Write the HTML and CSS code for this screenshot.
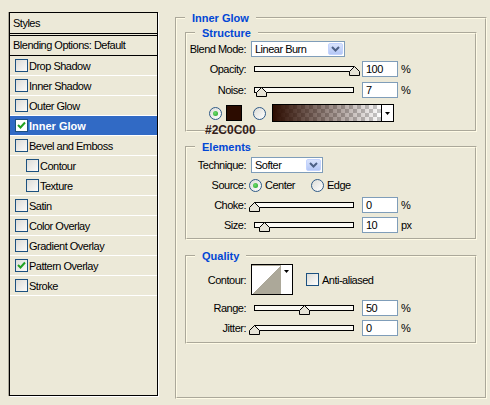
FILE: index.html
```html
<!DOCTYPE html>
<html lang="en">
<head>
    <meta charset="UTF-8">
    <title>Layer Style - Inner Glow</title>
    <link rel="stylesheet" href="styles.css">
</head>
<body>
    <div class="dialog">
        <div class="styles-list">
            <div class="list-header">Styles</div>
            <div class="list-blending">Blending Options: Default</div>
            <div class="list-item"><span class="checkbox"></span>Drop Shadow</div>
            <div class="list-item"><span class="checkbox"></span>Inner Shadow</div>
            <div class="list-item"><span class="checkbox"></span>Outer Glow</div>
            <div class="list-item selected">
                <span class="checkbox checked"><svg width="11" height="11" viewBox="0 0 11 11"><path d="M2 5 L4.5 7.5 L9 2.5"/></svg></span>Inner Glow
            </div>
            <div class="list-item"><span class="checkbox"></span>Bevel and Emboss</div>
            <div class="list-item sub"><span class="checkbox"></span>Contour</div>
            <div class="list-item sub"><span class="checkbox"></span>Texture</div>
            <div class="list-item"><span class="checkbox"></span>Satin</div>
            <div class="list-item"><span class="checkbox"></span>Color Overlay</div>
            <div class="list-item"><span class="checkbox"></span>Gradient Overlay</div>
            <div class="list-item">
                <span class="checkbox checked"><svg width="11" height="11" viewBox="0 0 11 11"><path d="M2 5 L4.5 7.5 L9 2.5"/></svg></span>Pattern Overlay
            </div>
            <div class="list-item"><span class="checkbox"></span>Stroke</div>
        </div>

        <fieldset class="group group-main">
            <legend>Inner Glow</legend>

            <fieldset class="group group-sub structure">
                <legend>Structure</legend>
                <div class="row row-blend">
                    <span class="label">Blend Mode:</span>
                    <div class="select select-blend">
                        <span class="select-value">Linear Burn</span>
                        <span class="select-button"><svg width="15" height="12" viewBox="0 0 15 12"><path d="M4 4 L7.5 7.5 L11 4"/></svg></span>
                    </div>
                </div>
                <div class="row row-opacity">
                    <span class="label">Opacity:</span>
                    <div class="slider">
                        <div class="slider-track"></div>
                        <svg class="slider-thumb" style="left: 100%" width="11" height="10" viewBox="0 0 11 10"><path d="M5.5 0.5 L10.5 5.5 V9.5 H0.5 V5.5 Z"/></svg>
                    </div>
                    <div class="input">100</div>
                    <span class="unit">%</span>
                </div>
                <div class="row row-noise">
                    <span class="label">Noise:</span>
                    <div class="slider">
                        <div class="slider-track"></div>
                        <svg class="slider-thumb" style="left: 7%" width="11" height="10" viewBox="0 0 11 10"><path d="M5.5 0.5 L10.5 5.5 V9.5 H0.5 V5.5 Z"/></svg>
                    </div>
                    <div class="input">7</div>
                    <span class="unit">%</span>
                </div>
                <div class="row row-colors">
                    <span class="radio on"></span>
                    <span class="swatch"></span>
                    <span class="radio radio-gradient"></span>
                    <div class="gradient-picker">
                        <span class="gradient-preview"></span>
                        <span class="picker-arrow"><svg width="5" height="3" viewBox="0 0 5 3"><polygon points="0,0 5,0 2.5,3"/></svg></span>
                    </div>
                </div>
                <div class="hex-caption">#2C0C00</div>
            </fieldset>

            <fieldset class="group group-sub elements">
                <legend>Elements</legend>
                <div class="row row-technique">
                    <span class="label">Technique:</span>
                    <div class="select select-technique">
                        <span class="select-value">Softer</span>
                        <span class="select-button"><svg width="15" height="12" viewBox="0 0 15 12"><path d="M4 4 L7.5 7.5 L11 4"/></svg></span>
                    </div>
                </div>
                <div class="row row-source">
                    <span class="label">Source:</span>
                    <span class="option option-center"><span class="radio on"></span>Center</span>
                    <span class="option"><span class="radio"></span>Edge</span>
                </div>
                <div class="row row-choke">
                    <span class="label">Choke:</span>
                    <div class="slider">
                        <div class="slider-track"></div>
                        <svg class="slider-thumb" style="left: 0%" width="11" height="10" viewBox="0 0 11 10"><path d="M5.5 0.5 L10.5 5.5 V9.5 H0.5 V5.5 Z"/></svg>
                    </div>
                    <div class="input">0</div>
                    <span class="unit">%</span>
                </div>
                <div class="row row-size">
                    <span class="label">Size:</span>
                    <div class="slider">
                        <div class="slider-track"></div>
                        <svg class="slider-thumb" style="left: 10%" width="11" height="10" viewBox="0 0 11 10"><path d="M5.5 0.5 L10.5 5.5 V9.5 H0.5 V5.5 Z"/></svg>
                    </div>
                    <div class="input">10</div>
                    <span class="unit">px</span>
                </div>
            </fieldset>

            <fieldset class="group group-sub quality">
                <legend>Quality</legend>
                <div class="row row-contour">
                    <span class="label">Contour:</span>
                    <div class="contour-picker">
                        <span class="contour-preview"></span>
                        <span class="picker-arrow"><svg width="5" height="3" viewBox="0 0 5 3"><polygon points="0,0 5,0 2.5,3"/></svg></span>
                    </div>
                    <span class="checkbox anti-alias"></span>
                    <span class="check-label">Anti-aliased</span>
                </div>
                <div class="row row-range">
                    <span class="label">Range:</span>
                    <div class="slider">
                        <div class="slider-track"></div>
                        <svg class="slider-thumb" style="left: 50%" width="11" height="10" viewBox="0 0 11 10"><path d="M5.5 0.5 L10.5 5.5 V9.5 H0.5 V5.5 Z"/></svg>
                    </div>
                    <div class="input">50</div>
                    <span class="unit">%</span>
                </div>
                <div class="row row-jitter">
                    <span class="label">Jitter:</span>
                    <div class="slider">
                        <div class="slider-track"></div>
                        <svg class="slider-thumb" style="left: 0%" width="11" height="10" viewBox="0 0 11 10"><path d="M5.5 0.5 L10.5 5.5 V9.5 H0.5 V5.5 Z"/></svg>
                    </div>
                    <div class="input">0</div>
                    <span class="unit">%</span>
                </div>
            </fieldset>
        </fieldset>
    </div>
</body>
</html>
```

FILE: styles.css
```css
body {
    margin: 0;
    background: #ece9d8;
    font-family: "Liberation Sans", Arial, sans-serif;
    font-size: 11px;
    letter-spacing: -0.5px;
    color: #000;
}

.dialog {
    display: flex;
    align-items: flex-start;
}

/* left list of effects */
.styles-list {
    width: 149px;
    height: 384px;
    margin: 12px 0 0 9px;
    box-sizing: border-box;
    border: 1px solid #000;
    box-shadow: -1px 0 0 #aca899, 1px 1px 0 #fff;
}

.list-header {
    height: 20px;
    line-height: 20px;
    padding-left: 3px;
    border-bottom: 3px double #000;
}

.list-blending {
    height: 19px;
    line-height: 19px;
    padding-left: 3px;
    border-bottom: 1px solid #000;
}

.list-item {
    display: flex;
    align-items: center;
    height: 19px;
    padding-left: 5px;
    border-bottom: 1px solid #fff;
    white-space: nowrap;
}

.list-item.sub {
    padding-left: 16px;
}

.list-item.selected {
    background: #316ac5;
    color: #fff;
    font-weight: bold;
    letter-spacing: 0;
}

.checkbox {
    width: 13px;
    height: 13px;
    margin-right: 1px;
    box-sizing: border-box;
    border: 1px solid #1c5180;
    background: linear-gradient(135deg, #dcdcd7, #fbfbf9);
    flex-shrink: 0;
}

.checkbox svg {
    display: block;
}

.checkbox path {
    fill: none;
    stroke: #21a121;
    stroke-width: 2;
}

.selected .checkbox {
    background: #fff;
}

/* group boxes */
.group {
    margin: 0;
    padding: 0;
    min-width: 0;
    box-sizing: border-box;
    border: 2px groove #fffbe6;
}

.group legend {
    padding: 0 7px;
    line-height: 14px;
    font-weight: bold;
    letter-spacing: 0;
    color: #0046d5;
}

.group-main {
    width: 312px;
    height: 388px;
    margin: 11px 0 0 17px;
    padding: 0 8px;
}

.group-sub {
    position: relative;
    width: 292px;
}

.group-sub legend {
    margin-left: 8px;
}

.structure {
    height: 106px;
    margin-top: 1px;
}

.elements {
    height: 100px;
    margin-top: 8px;
}

.quality {
    height: 95px;
    margin-top: 9px;
}

/* rows */
.row {
    display: flex;
    align-items: center;
    height: 16px;
    white-space: nowrap;
}

.label {
    width: 59px;
    margin-right: 5px;
    text-align: right;
    flex-shrink: 0;
}

.row-blend { margin-top: 1px; }
.row-opacity { margin-top: 4px; }
.row-noise { margin-top: 5px; }
.row-colors { margin-top: 6px; height: 18px; }

.row-technique { margin-top: 3px; }
.row-source { margin-top: 4px; }
.row-choke { margin-top: 4px; }
.row-size { margin-top: 4px; }

.row-contour { margin-top: 1px; height: 31px; }
.row-range { margin-top: 5px; }
.row-jitter { margin-top: 4px; }

/* combo boxes */
.select {
    display: flex;
    align-items: center;
    height: 16px;
    box-sizing: border-box;
    padding: 1px;
    border: 1px solid #7f9db9;
    background: #fff;
}

.select-blend { width: 94px; }
.select-technique { width: 72px; }

.select-value {
    flex: 1;
    padding-left: 2px;
}

.select-button {
    width: 15px;
    height: 12px;
    box-sizing: border-box;
    border: 1px solid #c3d3fd;
    border-radius: 2px;
    background: linear-gradient(#d9e3fc, #b4c7f6);
}

.select-button svg {
    display: block;
    margin: -1px 0 0 -1px;
}

.select-button path {
    fill: none;
    stroke: #4d6185;
    stroke-width: 2;
}

/* sliders */
.slider {
    position: relative;
    width: 100px;
    height: 6px;
    margin-left: 3px;
    flex-shrink: 0;
}

.slider-track {
    height: 6px;
    box-sizing: border-box;
    border: 1px solid #000;
    background: #fbfaf4;
}

.slider-thumb {
    position: absolute;
    top: 0;
    margin-left: -5.5px;
}

.slider-thumb path {
    fill: #e6e3d6;
    stroke: #000;
}

.input {
    width: 36px;
    height: 16px;
    margin-left: 8px;
    box-sizing: border-box;
    padding-left: 3px;
    border: 1px solid #7f9db9;
    background: #fff;
    line-height: 14px;
    flex-shrink: 0;
}

.unit {
    margin-left: 3px;
}

/* radios and colors */
.radio {
    width: 13px;
    height: 13px;
    box-sizing: border-box;
    border: 1px solid #2f5a87;
    border-radius: 50%;
    background: linear-gradient(135deg, #dcdcd7, #fff);
    display: flex;
    align-items: center;
    justify-content: center;
    flex-shrink: 0;
}

.radio.on::after {
    content: "";
    width: 5px;
    height: 5px;
    border-radius: 50%;
    background: radial-gradient(circle at 40% 40%, #6fdc6f, #21a121);
}

.row-colors .radio.on {
    margin-left: 22px;
}

.swatch {
    width: 16px;
    height: 16px;
    margin-left: 4px;
    box-sizing: border-box;
    border: 1px solid #000;
    background: #2c0c00;
}

.radio-gradient {
    margin-left: 11px;
}

.gradient-picker {
    display: flex;
    width: 122px;
    height: 18px;
    margin-left: 6px;
    box-sizing: border-box;
    border: 1px solid #000;
}

.gradient-preview {
    flex: 1;
    border-right: 1px solid #000;
    background:
        linear-gradient(to right, #2c0c00, rgba(44, 12, 0, 0)),
        repeating-conic-gradient(#c9c9c9 0 25%, #fff 0 50%) 0 0 / 8px 8px;
}

.picker-arrow {
    width: 11px;
    background: #fff;
    display: flex;
    justify-content: center;
    align-items: center;
}

.picker-arrow svg {
    display: block;
}

.hex-caption {
    position: absolute;
    left: 18px;
    top: 83px;
    font-size: 12px;
    font-weight: bold;
    letter-spacing: 0;
    color: #33201a;
}

/* source options */
.option {
    display: flex;
    align-items: center;
    gap: 3px;
}

.row-source .label {
    margin-right: 3px;
}

.option-center {
    width: 62px;
}

/* contour */
.contour-picker {
    display: flex;
    width: 42px;
    height: 31px;
    box-sizing: border-box;
    border: 1px solid #000;
    background: #fff;
}

.contour-preview {
    width: 30px;
    border-top: 1px solid #aca899;
    background: linear-gradient(to top left, #aca899 50%, #fff 50%);
}

.contour-picker .picker-arrow {
    align-items: flex-start;
    padding-top: 5px;
}

.anti-alias {
    margin-left: 13px;
    margin-right: 3px;
    background: linear-gradient(135deg, #dcdcd7, #fff);
}
```
